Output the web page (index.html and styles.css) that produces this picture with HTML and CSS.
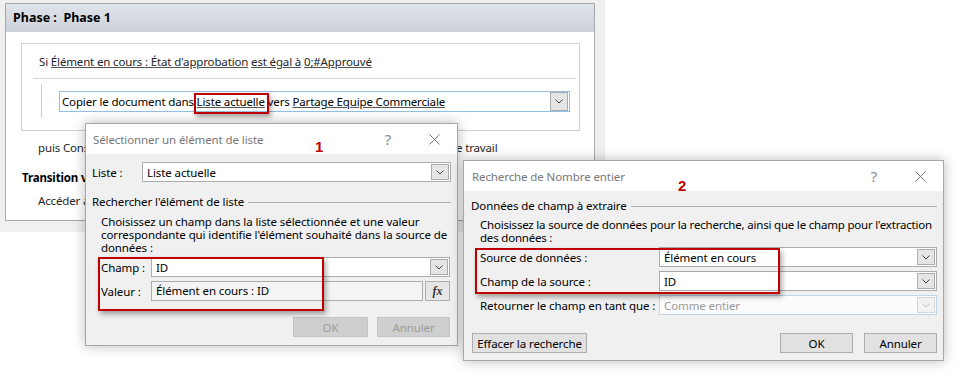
FILE: index.html
```html
<!DOCTYPE html>
<html lang="fr">
<head>
  <meta charset="UTF-8">
  <title>Phase 1</title>
  <link rel="stylesheet" href="styles.css">
</head>
<body>

<div class="workspace">
  <div class="panel">
    <div class="panel-head">Phase :&nbsp; Phase 1</div>
    <div class="step">
      <p class="cond">Si <u>Élément en cours : État d'approbation</u> <u>est égal à</u> <u>0;#Approuvé</u></p>
      <div class="action">
        <div class="action-field">
          <span class="action-text">Copier le document dans <u>Liste actuelle</u> vers <u>Partage Equipe Commerciale</u></span>
          <span class="drop">
            <svg width="8" height="5" viewBox="0 0 8 5"><polyline points="0.5,0.5 4,4 7.5,0.5" fill="none" stroke="#444" stroke-width="1"/></svg>
          </span>
        </div>
      </div>
    </div>
    <p class="then">puis Consigner Élément approuvé dans la liste de l'historique du nouveau flux de travail</p>
    <p class="transition">Transition vers l'étape</p>
    <p class="goto">Accéder à Phase 2</p>
  </div>
</div>

<!-- dialogue 1 -->
<div class="dialog d1">
  <div class="dialog-title">
    <span class="title-text">Sélectionner un élément de liste</span>
    <span class="help">?</span>
    <span class="close">
      <svg width="11" height="11" viewBox="0 0 11 11"><path d="M0.5 0.5 L10.5 10.5 M10.5 0.5 L0.5 10.5" stroke="#777" stroke-width="1"/></svg>
    </span>
  </div>
  <div class="dialog-body">
    <div class="row">
      <label class="lbl-short">Liste :</label>
      <div class="combo">
        <span class="combo-text">Liste actuelle</span>
        <span class="drop">
          <svg width="8" height="5" viewBox="0 0 8 5"><polyline points="0.5,0.5 4,4 7.5,0.5" fill="none" stroke="#444" stroke-width="1"/></svg>
        </span>
      </div>
    </div>
    <div class="legend">Rechercher l'élément de liste</div>
    <div class="group">
      <p class="help-text">Choisissez un champ dans la liste sélectionnée et une valeur<br>correspondante qui identifie l'élément souhaité dans la source de<br>données :</p>
      <div class="row">
        <label class="lbl-short">Champ :</label>
        <div class="combo">
          <span class="combo-text">ID</span>
          <span class="drop">
            <svg width="8" height="5" viewBox="0 0 8 5"><polyline points="0.5,0.5 4,4 7.5,0.5" fill="none" stroke="#444" stroke-width="1"/></svg>
          </span>
        </div>
      </div>
      <div class="row row-gap">
        <label class="lbl-short">Valeur :</label>
        <div class="textbox">Élément en cours : ID</div>
        <button class="fx"><i>fx</i></button>
      </div>
    </div>
    <div class="buttons">
      <button class="btn btn-ok" disabled>OK</button>
      <button class="btn" disabled>Annuler</button>
    </div>
  </div>
</div>

<!-- dialogue 2 -->
<div class="dialog d2">
  <div class="dialog-title">
    <span class="title-text">Recherche de Nombre entier</span>
    <span class="help">?</span>
    <span class="close">
      <svg width="11" height="11" viewBox="0 0 11 11"><path d="M0.5 0.5 L10.5 10.5 M10.5 0.5 L0.5 10.5" stroke="#777" stroke-width="1"/></svg>
    </span>
  </div>
  <div class="dialog-body">
    <div class="legend">Données de champ à extraire</div>
    <div class="group">
      <p class="help-text">Choisissez la source de données pour la recherche, ainsi que le champ pour l'extraction<br>des données :</p>
      <div class="row">
        <label class="lbl-long">Source de données :</label>
        <div class="combo">
          <span class="combo-text">Élément en cours</span>
          <span class="drop">
            <svg width="8" height="5" viewBox="0 0 8 5"><polyline points="0.5,0.5 4,4 7.5,0.5" fill="none" stroke="#444" stroke-width="1"/></svg>
          </span>
        </div>
      </div>
      <div class="row row-gap">
        <label class="lbl-long">Champ de la source :</label>
        <div class="combo">
          <span class="combo-text">ID</span>
          <span class="drop">
            <svg width="8" height="5" viewBox="0 0 8 5"><polyline points="0.5,0.5 4,4 7.5,0.5" fill="none" stroke="#444" stroke-width="1"/></svg>
          </span>
        </div>
      </div>
      <div class="row row-gap">
        <label class="lbl-long">Retourner le champ en tant que :</label>
        <div class="combo disabled">
          <span class="combo-text">Comme entier</span>
          <span class="drop">
            <svg width="8" height="5" viewBox="0 0 8 5"><polyline points="0.5,0.5 4,4 7.5,0.5" fill="none" stroke="#c2c2c2" stroke-width="1"/></svg>
          </span>
        </div>
      </div>
    </div>
    <div class="buttons buttons-split">
      <button class="btn btn-clear">Effacer la recherche</button>
      <span class="spacer"></span>
      <button class="btn btn-ok">OK</button>
      <button class="btn">Annuler</button>
    </div>
  </div>
</div>

<!-- annotations -->
<div class="mark mark-liste"></div>
<div class="mark mark-champ"></div>
<div class="mark mark-source"></div>
<span class="num num-1">1</span>
<span class="num num-2">2</span>

</body>
</html>
```

FILE: styles.css
```css
body {
  margin: 0;
  width: 977px;
  height: 377px;
  overflow: hidden;
  position: relative;
  background-color: white;
  font-family: 'Noto Sans', 'Open Sans', sans-serif;
  font-size: 12px;
  color: #000;
}
p {
  margin: 0;
}
u {
  text-decoration-color: #555;
}

/* panneau de fond */
.workspace {
  width: 605px;
  height: 232px;
  box-sizing: border-box;
  padding: 3px 10px 0 5px;
  background-color: #f0f0f0;
}
.panel {
  height: 218px;
  box-sizing: border-box;
  border: 1px solid #a9a9a9;
  background-color: white;
  color: #262626;
  font-size: 11.5px;
  letter-spacing: -0.15px;
}
.panel-head {
  height: 28px;
  line-height: 28px;
  padding-left: 7px;
  font-size: 12.5px;
  font-weight: bold;
  letter-spacing: 0;
  color: #000;
  background: linear-gradient(#dfe3ea, #cdd2da);
}
.step {
  height: 88px;
  box-sizing: border-box;
  margin: 11px 14px 0 15px;
  border: 1px solid #d0d0d0;
}
.cond {
  margin: 0 3px 0 11px;
  padding: 9px 0 7px 6px;
  line-height: 18px;
  border-bottom: 1px solid #d4d4d4;
}
.action {
  height: 34px;
  margin: 5px 0 0 19px;
  padding: 7px 0 0 17px;
  box-sizing: border-box;
  border-left: 1px solid #cfcfcf;
}
.action-field {
  width: 511px;
  height: 21px;
  box-sizing: border-box;
  display: flex;
  align-items: center;
  border: 1px solid #93bfe3;
  color: #000;
}
.action-text {
  flex: 1;
  padding-left: 2px;
}
.action-field .drop {
  height: 19px;
}
.then {
  margin-top: 8px;
  padding-left: 32px;
  line-height: 18px;
  white-space: nowrap;
}
.transition {
  margin-top: 12px;
  padding-left: 16px;
  line-height: 18px;
  font-weight: bold;
  color: #000;
}
.goto {
  margin-top: 5px;
  padding-left: 32px;
  line-height: 18px;
}

/* boîtes de dialogue */
.dialog {
  position: absolute;
  box-sizing: border-box;
  border: 1px solid #a7a7a7;
  background-color: #f0f0f0;
  box-shadow: 0 0 12px rgba(0, 0, 0, 0.28);
  font-size: 11.5px;
  letter-spacing: -0.1px;
}
.d1 {
  left: 85px;
  top: 123px;
  width: 373px;
  height: 223px;
}
.d2 {
  left: 463px;
  top: 160px;
  width: 481px;
  height: 201px;
}
.dialog-title {
  height: 30px;
  display: flex;
  align-items: center;
  background-color: white;
  color: #777;
}
.d1 .dialog-title {
  padding-left: 7px;
}
.d2 .dialog-title {
  padding-left: 8px;
}
.title-text {
  flex: 1;
}
.help {
  width: 46px;
  text-align: center;
  font-size: 15px;
  color: #8a8a8a;
}
.close {
  width: 46px;
  display: flex;
  justify-content: center;
}
.dialog-body {
  padding: 8px 6px 0 6px;
}
.d2 .dialog-body {
  padding-left: 7px;
}
.row {
  display: flex;
  align-items: center;
  height: 20px;
}
.row-gap {
  margin-top: 4px;
}
.lbl-short {
  width: 50px;
}
.lbl-long {
  width: 179px;
  white-space: nowrap;
}
.combo {
  flex: 1;
  height: 20px;
  box-sizing: border-box;
  display: flex;
  align-items: center;
  border: 1px solid #acacac;
  background-color: white;
}
.combo-text {
  flex: 1;
  padding-left: 4px;
}
.drop {
  width: 18px;
  height: 16px;
  box-sizing: border-box;
  margin-right: 1px;
  display: flex;
  align-items: center;
  justify-content: center;
  border: 1px solid #acacac;
  background-color: #e5e5e5;
}
.combo.disabled {
  border-color: #bfd5ea;
  background-color: #fbfbfb;
  color: #9a9a9a;
}
.combo.disabled .drop {
  border-color: #d6d6d6;
  background-color: #f2f2f2;
}
.legend {
  display: flex;
  align-items: center;
  margin-top: 13px;
  line-height: 14px;
}
.d2 .legend {
  margin-top: 0;
}
.legend::after {
  content: '';
  flex: 1;
  height: 1px;
  margin-left: 4px;
  background-color: #b0b0b0;
}
.group {
  margin: 0 1px 0 9px;
}
.d2 .group {
  margin: 0 0 0 9px;
}
.help-text {
  margin-top: 6px;
  margin-bottom: 3px;
  line-height: 13px;
  white-space: nowrap;
}
.d2 .help-text {
  line-height: 12.5px;
  letter-spacing: -0.2px;
}
.textbox {
  flex: 1;
  height: 20px;
  box-sizing: border-box;
  padding-left: 4px;
  line-height: 18px;
  border: 1px solid #acacac;
  background-color: #f4f4f4;
}
.fx {
  width: 25px;
  height: 20px;
  margin-left: 2px;
  padding: 0;
  border: 1px solid #adadad;
  background-color: #e6e6e6;
  font-family: 'Liberation Serif', serif;
  font-size: 12px;
  font-weight: bold;
  color: #333;
}
.buttons {
  display: flex;
  justify-content: flex-end;
  gap: 9px;
  margin: 16px 1px 0 0;
}
.buttons-split {
  gap: 11px;
  margin: 18px 0 0 1px;
}
.spacer {
  flex: 1;
}
.btn {
  width: 73px;
  height: 20px;
  padding: 0;
  border: 1px solid #adadad;
  background-color: #e1e1e1;
  font-family: 'Noto Sans', 'Open Sans', sans-serif;
  font-size: 11.5px;
  letter-spacing: -0.1px;
  color: #000;
}
.btn-ok {
  width: 75px;
}
.d2 .btn-ok {
  width: 73px;
}
.btn-clear {
  width: 115px;
}
.btn:disabled {
  border-color: #c4c4c4;
  background-color: #cfcfcf;
  color: #9c9c9c;
}

/* encadrés rouges */
.mark {
  position: absolute;
  box-sizing: border-box;
  border: 2px solid #c00000;
  box-shadow: 2px 3px 5px rgba(0, 0, 0, 0.35);
}
.mark-liste {
  left: 194px;
  top: 93px;
  width: 75px;
  height: 21px;
}
.mark-champ {
  left: 98px;
  top: 257px;
  width: 226px;
  height: 54px;
}
.mark-source {
  left: 475px;
  top: 248px;
  width: 305px;
  height: 46px;
}
.num {
  position: absolute;
  font-family: 'Liberation Sans', sans-serif;
  font-size: 15px;
  font-weight: bold;
  color: #c00000;
}
.num-1 {
  left: 315px;
  top: 138px;
}
.num-2 {
  left: 678px;
  top: 177px;
}
```
